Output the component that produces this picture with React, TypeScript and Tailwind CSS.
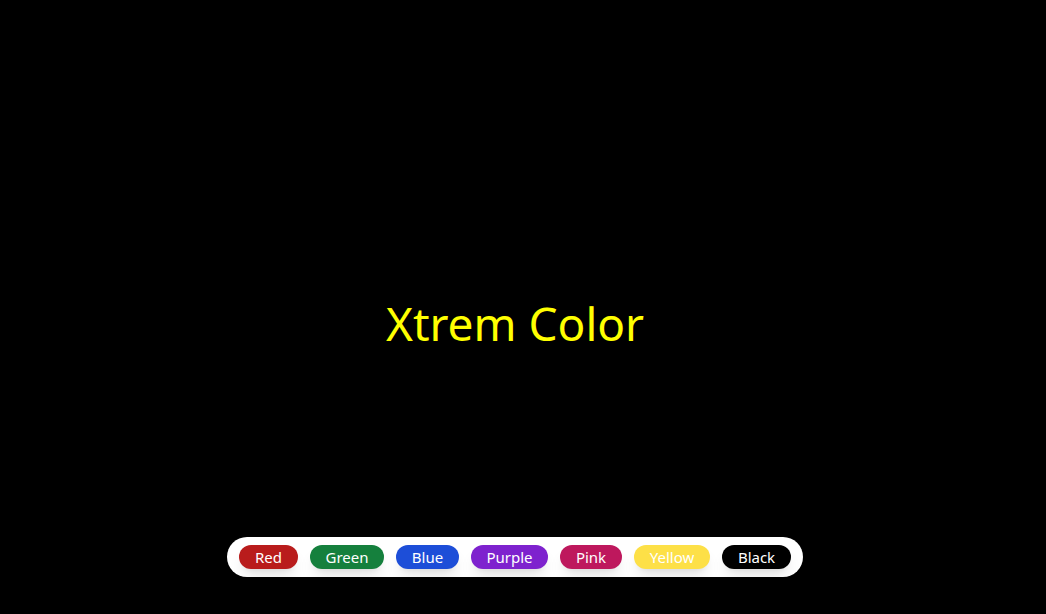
const colors = [
  { name: "Red", width: "w-[59px]", bg: "bg-[#b91c1c]" },
  { name: "Green", width: "w-[74px]", bg: "bg-[#15803d]" },
  { name: "Blue", width: "w-[63px]", bg: "bg-[#1d4ed8]" },
  { name: "Purple", width: "w-[77px]", bg: "bg-[#7e22ce]" },
  { name: "Pink", width: "w-[62px]", bg: "bg-[#be185d]" },
  { name: "Yellow", width: "w-[76px]", bg: "bg-[#fde047]" },
  { name: "Black", width: "w-[69px]", bg: "bg-black" },
];

export default function App() {
  return (
    <main className="flex min-h-screen flex-col items-center bg-black pr-4 pb-[37px] font-['Noto_Sans',sans-serif]">
      <div className="flex flex-1 items-end pb-[190px]">
        <h1 className="text-[46px] leading-12 text-[#ffff00]">Xtrem Color</h1>
      </div>
      <div className="flex flex-wrap justify-center gap-3 rounded-[20px] bg-white px-3 py-2 shadow-lg">
        {colors.map((color) => (
          <button
            key={color.name}
            type="button"
            className={`h-6 rounded-full text-center text-[15px] leading-6 text-white shadow-lg ${color.width} ${color.bg}`}
          >
            {color.name}
          </button>
        ))}
      </div>
    </main>
  );
}
